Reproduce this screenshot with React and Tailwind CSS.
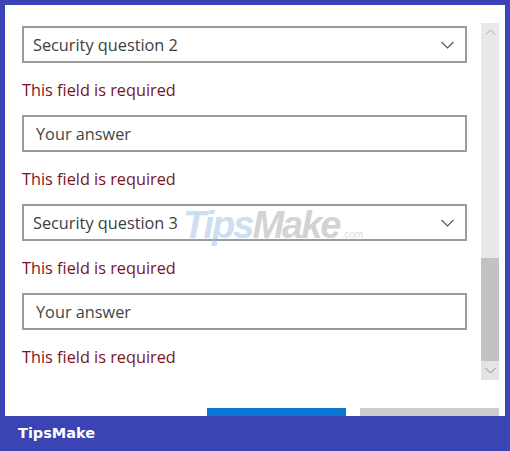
import React from "react";

const font = { fontFamily: '"Open Sans", "Noto Sans", sans-serif' };

function Chevron({ className = "" }) {
  return (
    <svg width="13" height="8" viewBox="0 0 13 8" className={className}>
      <path d="M0.5 1 L6.5 7 L12.5 1" fill="none" stroke="currentColor" strokeWidth="1.1" />
    </svg>
  );
}

function Select({ label }) {
  return (
    <div className="h-[37px] border-2 border-[#9b9b9b] bg-white flex items-center justify-between pl-[9px] pr-[11px]">
      <span className="text-[16.3px] leading-[20px] text-[#3d3d3d]">{label}</span>
      <Chevron className="text-[#555]" />
    </div>
  );
}

function Input() {
  return (
    <div className="h-[37px] border-2 border-[#9b9b9b] bg-white flex items-center pl-[12px]">
      <span className="text-[16.3px] leading-[20px] text-[#444]">Your answer</span>
    </div>
  );
}

function ErrorMsg() {
  return (
    <div className="h-[52px] pt-[17px]">
      <div className="text-[16.3px] leading-[20px] text-[#7a1319]">This field is required</div>
    </div>
  );
}

export default function App() {
  return (
    <div className="w-[510px] h-[451px] bg-[#3a44b5] pt-[5px] px-[5px] flex flex-col" style={font}>
      <div className="relative h-[411px] bg-white overflow-hidden flex flex-col">
        <div className="flex pt-[18px]">
          <div className="w-[445px] ml-[17px] mt-[3px] flex flex-col">
            <Select label="Security question 2" />
            <ErrorMsg />
            <Input />
            <ErrorMsg />
            <Select label="Security question 3" />
            <ErrorMsg />
            <Input />
            <ErrorMsg />
          </div>
          <div className="ml-[14px] w-[18px] h-[357px] bg-[#e8e8e8] flex flex-col">
            <div className="h-[18px] flex items-center justify-center text-[#b0b0b0]">
              <svg width="11" height="7" viewBox="0 0 11 7">
                <path d="M0.5 6 L5.5 1 L10.5 6" fill="none" stroke="currentColor" strokeWidth="1" />
              </svg>
            </div>
            <div className="flex-1" />
            <div className="h-[103px] bg-[#c2c2c2]" />
            <div className="h-[19px] bg-[#e4e4e4] flex items-center justify-center text-[#888]">
              <svg width="11" height="7" viewBox="0 0 11 7">
                <path d="M0.5 1 L5.5 6 L10.5 1" fill="none" stroke="currentColor" strokeWidth="1" />
              </svg>
            </div>
          </div>
        </div>
        <div className="flex justify-end gap-[14px] pr-[6px] mt-[26px]">
          <div className="w-[139px] h-[32px] bg-[#0a78d2]" />
          <div className="w-[139px] h-[32px] bg-[#cccccc]" />
        </div>
        <div
          className="absolute left-[178px] top-[192px] pointer-events-none select-none flex items-baseline opacity-50"
          style={{ fontFamily: '"Liberation Sans", Arial, sans-serif' }}
        >
          <span className="text-[38px] font-bold italic tracking-[-2px] text-[#9dbde6]">Tips</span>
          <span className="text-[38px] font-bold italic tracking-[-2px] text-[#a8a8a8]">Make</span>
          <span className="text-[10px] text-[#bbbbbb] ml-[2px]">.com</span>
        </div>
      </div>
      <div className="flex-1 flex items-center pl-[13px]">
        <span className="text-white text-[14.5px] font-bold" style={{ fontFamily: '"DejaVu Sans", Verdana, sans-serif' }}>
          TipsMake
        </span>
      </div>
    </div>
  );
}
